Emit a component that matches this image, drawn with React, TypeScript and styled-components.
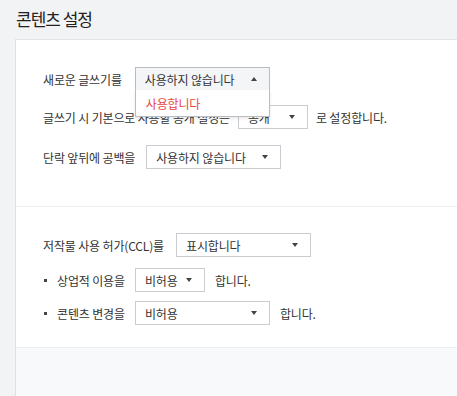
import { createGlobalStyle, styled } from "styled-components";

const GlobalStyle = createGlobalStyle`
  html, body {
    margin: 0;
    padding: 0;
    background: #f2f3f5;
    overflow: hidden;
  }
  body {
    font-family: "Noto Sans CJK KR", "Noto Sans", sans-serif;
    color: #333;
  }
`;

const Page = styled.div`
  width: 457px;
  height: 396px;
  overflow: hidden;
`;

const Title = styled.h1`
  margin: 0;
  padding: 6px 0 0 16px;
  height: 33px;
  font-size: 17px;
  font-weight: 400;
  letter-spacing: -1px;
  color: #222;
`;

const Panel = styled.div`
  margin-left: 15px;
  margin-right: -40px;
  background: #f8f9fb;
  border-top: 1px solid #e1e4e8;
  border-left: 1px solid #dde0e5;
  height: 400px;
`;

const Section = styled.div<{ $top: number; $bottom: number }>`
  background: #fff;
  border-bottom: 1px solid #eceef1;
  padding: ${(p) => p.$top}px 0 ${(p) => p.$bottom}px 27px;
  display: flex;
  flex-direction: column;
`;

const Row = styled.div<{ $gap: number; $space?: number }>`
  display: flex;
  align-items: center;
  gap: ${(p) => p.$space ?? 10}px;
  font-size: 12px;
  letter-spacing: -0.15px;
  margin-bottom: ${(p) => p.$gap}px;
`;

const Bullet = styled.span`
  width: 3px;
  height: 3px;
  background: #444;
  margin-left: 1px;
`;

const SelectBox = styled.div<{ $width: number; $open?: boolean }>`
  position: relative;
  box-sizing: border-box;
  width: ${(p) => p.$width}px;
  height: 24px;
  border: 1px solid ${(p) => (p.$open ? "#b9bdc3" : "#c9cdd2")};
  background: ${(p) => (p.$open ? "#f4f5f7" : "#fff")};
  display: flex;
  align-items: center;
  justify-content: space-between;
  padding: 0 12px 0 9px;
  font-size: 12px;
  color: #333;
  z-index: ${(p) => (p.$open ? 2 : 0)};
`;

const Arrow = styled.span<{ $up?: boolean }>`
  width: 0;
  height: 0;
  border-left: 3px solid transparent;
  border-right: 3px solid transparent;
  ${(p) =>
    p.$up ? "border-bottom: 4px solid #444;" : "border-top: 4px solid #444;"}
`;

const Menu = styled.div`
  position: absolute;
  top: 100%;
  left: -1px;
  right: -1px;
  height: 27px;
  background: #fff;
  border: 1px solid #b9bdc3;
  border-top: none;
  box-shadow: 0 2px 3px rgba(0, 0, 0, 0.08);
  display: flex;
  align-items: center;
  padding-left: 10px;
  box-sizing: border-box;
`;

const Option = styled.span`
  color: #e8473d;
  font-size: 12px;
`;

function Select({
  width,
  value,
  open,
}: {
  width: number;
  value: string;
  open?: boolean;
}) {
  return (
    <SelectBox $width={width} $open={open}>
      <span>{value}</span>
      <Arrow $up={open} />
      {open && (
        <Menu>
          <Option>사용합니다</Option>
        </Menu>
      )}
    </SelectBox>
  );
}

export default function App() {
  return (
    <Page>
      <GlobalStyle />
      <Title>콘텐츠 설정</Title>
      <Panel>
        <Section $top={27} $bottom={37}>
          <Row $gap={14} $space={13}>
            <span>새로운 글쓰기를</span>
            <Select width={135} value="사용하지 않습니다" open />
          </Row>
          <Row $gap={16} $space={8}>
            <span>글쓰기 시 기본으로 사용할 공개 설정은</span>
            <Select width={70} value="공개" />
            <span>로 설정합니다.</span>
          </Row>
          <Row $gap={0} $space={11}>
            <span>단락 앞뒤에 공백을</span>
            <Select width={135} value="사용하지 않습니다" />
          </Row>
        </Section>
        <Section $top={26} $bottom={22}>
          <Row $gap={11} $space={12}>
            <span>저작물 사용 허가(CCL)를</span>
            <Select width={135} value="표시합니다" />
          </Row>
          <Row $gap={9}>
            <Bullet />
            <span>상업적 이용을</span>
            <Select width={70} value="비허용" />
            <span>합니다.</span>
          </Row>
          <Row $gap={0}>
            <Bullet />
            <span>콘텐츠 변경을</span>
            <Select width={135} value="비허용" />
            <span>합니다.</span>
          </Row>
        </Section>
      </Panel>
    </Page>
  );
}
